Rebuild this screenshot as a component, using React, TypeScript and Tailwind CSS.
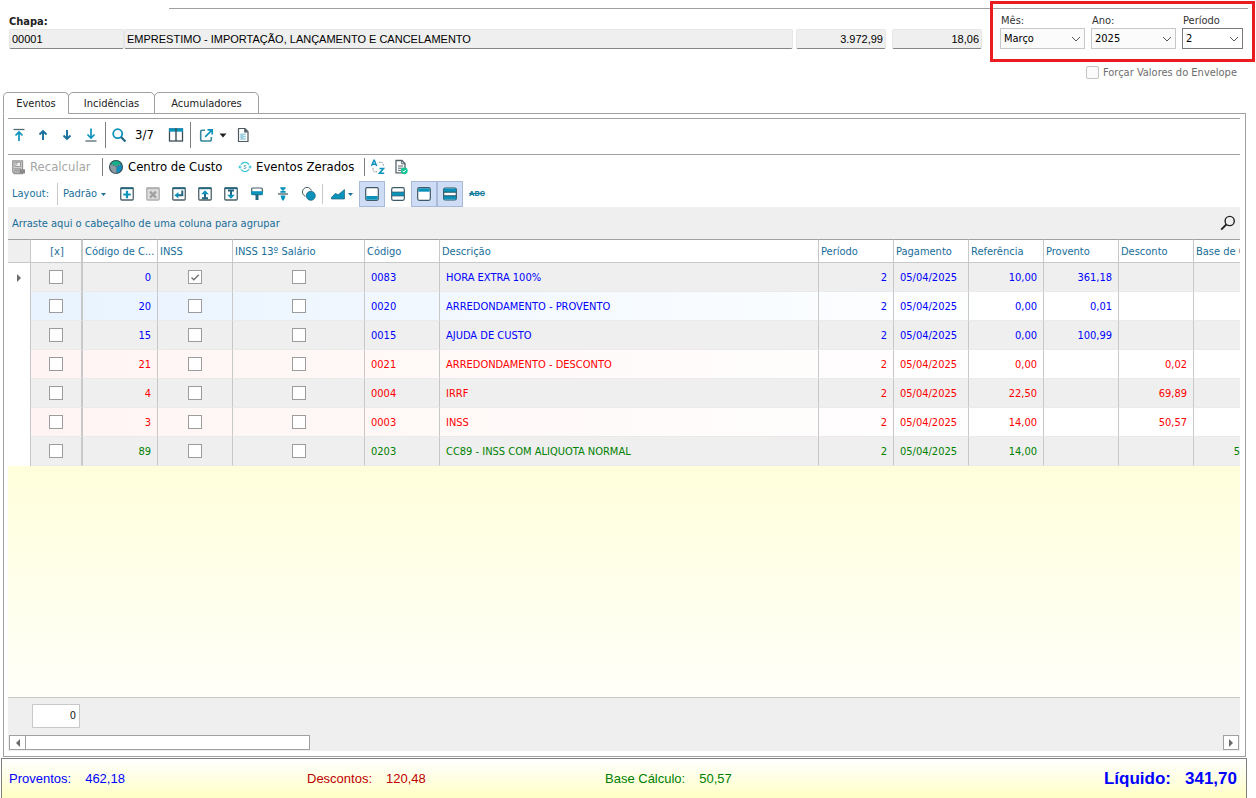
import { useState } from 'react';
import type { ReactNode } from 'react';
import clsx from 'clsx';

type Tone = 'blue' | 'red' | 'green';

interface Evento {
  centro: string;
  inss: boolean;
  codigo: string;
  descricao: string;
  referencia: string;
  provento?: string;
  desconto?: string;
  base?: string;
  tone: Tone;
}

const EVENTOS: Evento[] = [
  { centro: '0', inss: true, codigo: '0083', descricao: 'HORA EXTRA 100%', referencia: '10,00', provento: '361,18', tone: 'blue' },
  { centro: '20', inss: false, codigo: '0020', descricao: 'ARREDONDAMENTO - PROVENTO', referencia: '0,00', provento: '0,01', tone: 'blue' },
  { centro: '15', inss: false, codigo: '0015', descricao: 'AJUDA DE CUSTO', referencia: '0,00', provento: '100,99', tone: 'blue' },
  { centro: '21', inss: false, codigo: '0021', descricao: 'ARREDONDAMENTO - DESCONTO', referencia: '0,00', desconto: '0,02', tone: 'red' },
  { centro: '4', inss: false, codigo: '0004', descricao: 'IRRF', referencia: '22,50', desconto: '69,89', tone: 'red' },
  { centro: '3', inss: false, codigo: '0003', descricao: 'INSS', referencia: '14,00', desconto: '50,57', tone: 'red' },
  { centro: '89', inss: false, codigo: '0203', descricao: 'CC89 - INSS COM ALIQUOTA NORMAL', referencia: '14,00', base: '50,57', tone: 'green' },
];

const TONE_TEXT: Record<Tone, string> = {
  blue: 'text-[#0000ff]',
  red: 'text-[#ff0000]',
  green: 'text-[#008000]',
};

const TONE_ROW: Record<Tone, string> = {
  blue: 'bg-linear-to-r from-[#e8f3ff] to-white to-80%',
  red: 'bg-linear-to-r from-[#fff4f3] to-white to-80%',
  green: 'bg-[#efefef]',
};

const TEAL = '#0b92ba';
const NAVY = '#22667f';
const SLATE = '#4d6068';

function Icon({ children }: { children: ReactNode }) {
  return (
    <svg width="16" height="16" viewBox="0 0 16 16" fill="none" aria-hidden="true" className="shrink-0">
      {children}
    </svg>
  );
}

function SmallCaret() {
  return <svg width="5" height="3" viewBox="0 0 5 3" aria-hidden="true" className="shrink-0"><path d="M0 0h5L2.5 3z" fill="#1b6f9b" /></svg>;
}

function Sep({ className }: { className: string }) {
  return <span className={clsx('w-px shrink-0', className)} />;
}

/* Framed icon used by the layout toolbar */
function Frame({ children, off = false }: { children: ReactNode; off?: boolean }) {
  return (
    <Icon>
      <rect x="1.75" y="2" width="12.5" height="12" rx="1" fill={off ? '#dcdcdc' : '#fff'} stroke={off ? '#b0b0b0' : SLATE} strokeWidth="1.3" />
      <path d="M1.5 2.3h13" stroke={off ? '#b0b0b0' : NAVY} strokeWidth="1.8" />
      {children}
    </Icon>
  );
}

function ToolButton({ label, active = false, disabled = false, children }: { label: string; active?: boolean; disabled?: boolean; children: ReactNode }) {
  return (
    <button
      title={label}
      aria-label={label}
      disabled={disabled}
      className={clsx('flex h-[26px] w-[26px] shrink-0 items-center justify-center border', active ? 'border-[#a9b9d8] bg-[#cfdcf5]' : 'border-transparent')}
    >
      {children}
    </button>
  );
}

function IconButton({ label, className = '', children }: { label: string; className?: string; children: ReactNode }) {
  return (
    <button title={label} aria-label={label} className={clsx('flex h-6 w-4 shrink-0 items-center justify-center', className)}>
      {children}
    </button>
  );
}

function Field({ label, value, className }: { label: string; value: string; className: string }) {
  return (
    <input
      readOnly
      aria-label={label}
      defaultValue={value}
      className={clsx(
        "h-5 min-w-0 rounded-[2px] border border-[#e6e6e6] border-b-[#868686] bg-[#efefef] px-0.5 font-['Liberation_Sans',sans-serif] text-black outline-none",
        className,
      )}
    />
  );
}

function Combo({ id, label, value, className, dark = false }: { id: string; label: string; value: string; className: string; dark?: boolean }) {
  return (
    <div className={className}>
      <label htmlFor={id} className="block h-4 pl-px leading-[18px] text-[#333]">{label}</label>
      <div className="relative">
        <select
          id={id}
          defaultValue={value}
          className={clsx('block h-[21px] w-full appearance-none border pt-0.5 pl-[3px] text-black outline-none', dark ? 'border-[#7a7a7a] bg-white' : 'border-[#c8c8c8] bg-[#fbfbfb]')}
        >
          <option>{value}</option>
        </select>
        <svg width="10" height="6" viewBox="0 0 10 6" fill="none" aria-hidden="true" className="pointer-events-none absolute top-2 right-1">
          <path d="M1 1l4 4 4-4" stroke="#555" />
        </svg>
      </div>
    </div>
  );
}

function CellCheck({ label, checked = false }: { label: string; checked?: boolean }) {
  return (
    <span className="inline-grid h-3.5 w-3.5 align-middle">
      <input
        type="checkbox"
        aria-label={label}
        defaultChecked={checked}
        className="peer col-start-1 row-start-1 h-3.5 w-3.5 appearance-none border border-[#9c9c9c] bg-white"
      />
      <svg viewBox="0 0 14 14" fill="none" aria-hidden="true" className="pointer-events-none invisible col-start-1 row-start-1 h-3.5 w-3.5 peer-checked:visible">
        <path d="M3.5 7.5l2.3 2.3 5-5" stroke="#737373" strokeWidth="1.4" />
      </svg>
    </span>
  );
}

function HeaderCell({ children, className = '' }: { children?: ReactNode; className?: string }) {
  return (
    <th className={clsx('h-6 overflow-hidden border-t border-r border-b border-t-[#a0a0a0] border-r-[#c8c8c8] border-b-[#c8c8c8] pt-[3px] pb-0 pl-0.5 font-normal whitespace-nowrap', className)}>
      {children}
    </th>
  );
}

function Cell({ children, className = '' }: { children?: ReactNode; className?: string }) {
  return <td className={clsx('border-r border-b border-r-[#c8c8c8] border-b-[#eaeaea] px-1.5 pt-0.5 pb-0', className)}>{children}</td>;
}

function CheckCell({ label, checked, className = '' }: { label: string; checked?: boolean; className?: string }) {
  return (
    <td className={clsx('border-r border-b border-r-[#c8c8c8] border-b-[#eaeaea] p-0 text-center', className)}>
      <CellCheck label={label} checked={checked} />
    </td>
  );
}

function TopHeader() {
  return (
    <header className="h-[92px]">
      <div className="mt-2 mr-2 ml-[169px] h-px bg-[#a0a0a0]" />
      <div className="flex items-start">
        <div className="min-w-0 flex-1 pt-1 pl-[9px]">
          <div className="h-4 leading-[18px] font-bold text-[#222]">Chapa:</div>
          <div className="flex">
            <Field label="Chapa" value="00001" className="w-[115px]" />
            <Field label="Descrição" value="EMPRESTIMO - IMPORTAÇÃO, LANÇAMENTO E CANCELAMENTO" className="flex-1" />
            <Field label="Salário" value="3.972,99" className="ml-[3px] w-[90px] text-right" />
            <Field label="Valor hora" value="18,06" className="ml-1.5 w-[90px] text-right" />
          </div>
        </div>
        <div className="mr-px ml-2 w-[265px] shrink-0">
          <div className="-mt-2 flex h-[61px] gap-1.5 border-[3px] border-[#ea1c1f] pt-2 pl-[7px]">
            <Combo id="mes" label="Mês:" value="Março" className="w-[85px]" />
            <Combo id="ano" label="Ano:" value="2025" className="w-[85px]" />
            <Combo id="periodo" label="Período" value="2" className="w-[61px]" dark />
          </div>
          <label className="flex h-[21px] items-center justify-end gap-1 pr-[18px] text-[#6d6d6d]">
            <input type="checkbox" className="h-[13px] w-[13px] appearance-none rounded-[2px] border border-[#c4c4c4] bg-[#fbfbfb]" />
            <span className="pt-px">Forçar Valores do Envelope</span>
          </label>
        </div>
      </div>
    </header>
  );
}

function NavToolbar() {
  return (
    <div className="flex h-9 items-center border-t border-[#a0a0a0] pb-[3px] pl-[3px] text-[13px] text-black">
      <div className="flex gap-2">
        <IconButton label="Primeiro">
          <Icon><path d="M2.5 2.5h11" stroke="#506a75" strokeWidth="1.3" /><path d="M8 14V5.5M4.5 8.5L8 5l3.5 3.5" stroke={TEAL} strokeWidth="1.7" /></Icon>
        </IconButton>
        <IconButton label="Anterior">
          <Icon><path d="M8 13V4M4.5 7.5L8 4l3.5 3.5" stroke="#176f9c" strokeWidth="1.9" /></Icon>
        </IconButton>
        <IconButton label="Próximo">
          <Icon><path d="M8 3v9M4.5 8.5L8 12l3.5-3.5" stroke="#176f9c" strokeWidth="1.9" /></Icon>
        </IconButton>
        <IconButton label="Último">
          <Icon><path d="M2.5 14h11" stroke="#506a75" strokeWidth="1.3" /><path d="M8 1.5V10M4.5 7.5L8 11l3.5-3.5" stroke={TEAL} strokeWidth="1.7" /></Icon>
        </IconButton>
      </div>
      <Sep className="ml-1.5 h-[26px] bg-[#808080]" />
      <IconButton label="Localizar" className="ml-[5px]">
        <Icon><circle cx="6.7" cy="6.7" r="4.5" stroke={TEAL} strokeWidth="1.8" /><path d="M10 10l4.5 4.5" stroke={NAVY} strokeWidth="2.2" /></Icon>
      </IconButton>
      <span className="w-[41px] pl-2">3/7</span>
      <IconButton label="Colunas">
        <Icon>
          <rect x="1.5" y="2" width="13" height="12" stroke="#3c4c54" strokeWidth="1.3" />
          <path d="M1 1.3h14v3.4H1z" fill={TEAL} />
          <path d="M8 1.3V14" stroke="#3c4c54" strokeWidth="1.4" />
        </Icon>
      </IconButton>
      <Sep className="ml-1.5 h-[26px] bg-[#808080]" />
      <button title="Exportar" aria-label="Exportar" className="ml-2 flex h-6 items-center gap-1">
        <Icon>
          <path d="M6 3.2H3.2A1.5 1.5 0 0 0 1.7 4.7v7.8A1.5 1.5 0 0 0 3.2 14h7.6a1.5 1.5 0 0 0 1.5-1.5V10" stroke="#38879c" strokeWidth="1.6" />
          <path d="M8.5 2.8h4.7v4.7M13 3L6.2 9.8" stroke={TEAL} strokeWidth="1.7" />
        </Icon>
        <svg width="8" height="5" viewBox="0 0 8 5" aria-hidden="true" className="shrink-0"><path d="M0.5 0.5h7L4 4.5z" fill="#222" /></svg>
      </button>
      <IconButton label="Relatório" className="ml-2">
        <Icon>
          <path d="M3.5 1.5h6.3l3.2 3.2v9.8H3.5z" fill="#fff" stroke="#4c5960" strokeWidth="1.2" strokeLinejoin="round" />
          <path d="M9.2 1.5v4H13z" fill="#4c5960" />
          <path d="M5.3 6.5h5.5v6.3H5.3z" fill="#9ccfdf" />
          <path d="M8.5 8.3h2.3M8.5 10.8h2.3" stroke="#fff" />
        </Icon>
      </IconButton>
    </div>
  );
}

function ActionToolbar() {
  return (
    <div className="flex h-[27px] items-center border-t border-[#a0a0a0] pb-0.5 pl-[3px] text-[13px] text-black">
      <button disabled className="flex w-[91px] items-center gap-[3px] text-[#a6a6a6]">
        <Icon>
          <path d="M1.8 1.8h9.7v12.7H3.3L1.8 13z" fill="#d0d0d0" stroke="#959595" strokeWidth="1.3" />
          <path d="M4 3.2h5.5v4.3H4z" fill="#f4f4f4" stroke="#959595" />
          <path d="M5.8 3.5v2.7" stroke="#959595" />
          <path d="M3 9h7v4.5H3z" fill="#a8a8a8" />
          <path d="M8.8 10.3H14V14.5H8.8z" fill="#8a8a8a" />
        </Icon>
        Recalcular
      </button>
      <Sep className="h-[18px] bg-[#808080]" />
      <button className="ml-[5px] flex w-[129px] items-center gap-1">
        <Icon>
          <circle cx="8" cy="8" r="6.4" fill="#fff" />
          <path d="M8 7L2.2 4.8A6.6 6.6 0 0 1 13.8 4.8z" fill="#12b28d" />
          <path d="M8.3 7.8l5.6-2.6a6.3 6.3 0 0 1-5.6 9z" fill="#0f8ec0" />
          <path d="M7.4 7.8L2 5.4a6.3 6.3 0 0 0 5.4 8.8z" fill="#8d9ba1" />
          <circle cx="8" cy="8" r="6.5" stroke="#3d4f57" strokeWidth="1.1" />
          <path d="M8 7.5V14M2.5 5.2L8 7.5l5.5-2.3" stroke="#3d4f57" strokeWidth=".9" />
        </Icon>
        Centro de Custo
      </button>
      <button className="flex w-[127px] items-center gap-[3px]">
        <Icon>
          <path d="M4 5.6A4.8 4.8 0 0 1 12 5.6M12 10.4A4.8 4.8 0 0 1 4 10.4" stroke="#35c6d8" strokeWidth="1.2" />
          <path d="M2 8h2.4M11.6 8H14" stroke="#1bb5d0" strokeWidth="1.2" />
          <path d="M3.4 5.8L1.2 8l2.2 2.2zM12.6 5.8L14.8 8l-2.2 2.2z" fill="#3fcadb" />
          <path d="M9.3 6.5H7.5L6.8 7.3l2.4 1.3-.8 1H6.6" stroke="#5fa9b8" strokeWidth=".9" />
        </Icon>
        Eventos Zerados
      </button>
      <Sep className="h-[18px] bg-[#808080]" />
      <IconButton label="Ordenar" className="ml-[5px]">
        <Icon>
          <path d="M1.5 7L3.9 1.3h.4L6.7 7M2.5 5.3h3.2" stroke={TEAL} strokeWidth="1.4" />
          <path d="M9.5 9.5h4l-4 4.8h4.7" stroke={TEAL} strokeWidth="1.6" />
          <path d="M9 3.3h2.3a2 2 0 0 1 2 2V7M7 12.8H5a2 2 0 0 1-2-2V9" stroke="#7d8a90" strokeDasharray="1.5 1" />
        </Icon>
      </IconButton>
      <IconButton label="Validar" className="ml-[7px]">
        <Icon>
          <path d="M3 1.5h6l3 3v9.3H3z" fill="#fff" stroke="#56646b" strokeWidth="1.3" />
          <path d="M8.7 1.5v3.3H12M5 7h5M5 9.2h5M5 11.4h3" stroke="#56646b" />
          <circle cx="11.3" cy="11.8" r="3.4" fill="#14c595" />
          <path d="M9.7 11.9l1.2 1.2 2-2.2" stroke="#fff" />
        </Icon>
      </IconButton>
    </div>
  );
}

function LayoutToolbar() {
  return (
    <div className="flex h-[26px] items-center pl-1 text-[#1b6f9b]">
      <span className="w-[45px]">Layout:</span>
      <Sep className="h-[22px] bg-[#c8c8c8]" />
      <button className="ml-[5px] flex w-[51px] items-center gap-1">
        Padrão
        <SmallCaret />
      </button>
      <ToolButton label="Novo"><Frame><path d="M8 4.8v7.4M4.3 8.5h7.4" stroke={TEAL} strokeWidth="2.2" /></Frame></ToolButton>
      <ToolButton label="Excluir" disabled><Frame off><path d="M5 5.6l6 6M11 5.6l-6 6" stroke="#a0a0a0" strokeWidth="2.2" /></Frame></ToolButton>
      <ToolButton label="Aplicar"><Frame><path d="M11.3 4.5v4.7H6" stroke={NAVY} strokeWidth="2" /><path d="M3.4 9.2l4-3.3v6.6z" fill={TEAL} /></Frame></ToolButton>
      <ToolButton label="Importar"><Frame><path d="M8 12.8V7M5 12.3h6" stroke={NAVY} strokeWidth="2" /><path d="M4.2 8.2L8 4.2l3.8 4z" fill={TEAL} /></Frame></ToolButton>
      <ToolButton label="Exportar layout"><Frame><path d="M8 4V9M5 4.5h6" stroke={NAVY} strokeWidth="2" /><path d="M4.2 8.8L8 12.8l3.8-4z" fill={TEAL} /></Frame></ToolButton>
      <ToolButton label="Formatação">
        <Icon>
          <rect x="2.7" y="2" width="10.6" height="6.6" rx="1" fill="#fff" stroke={SLATE} strokeWidth="1.2" />
          <path d="M2 5.2h12v3.5H2z" fill={TEAL} />
          <path d="M6.5 8.5h3V14h-3z" fill={NAVY} />
        </Icon>
      </ToolButton>
      <ToolButton label="Ajustar">
        <Icon>
          <path d="M5.5 1.5l5 5M10.5 1.5l-5 5M5.5 2h5M5.5 6h5" stroke={TEAL} strokeWidth="1.5" />
          <path d="M3 8h10" stroke={SLATE} strokeWidth="1.3" />
          <path d="M5.5 9.5h5L9.5 13 8 15l-1.5-2z" fill={TEAL} />
        </Icon>
      </ToolButton>
      <ToolButton label="Filtro">
        <Icon>
          <circle cx="6" cy="6" r="4.6" stroke={SLATE} fill="#fff" />
          <circle cx="9.8" cy="9.8" r="5.4" fill="#fff" />
          <circle cx="9.8" cy="9.8" r="4.5" fill={TEAL} stroke={NAVY} strokeWidth=".8" />
        </Icon>
      </ToolButton>
      <Sep className="h-5 bg-[#c8c8c8]" />
      <button title="Gráfico" aria-label="Gráfico" className="flex h-[26px] w-9 shrink-0 items-center justify-center gap-0.5">
        <Icon>
          <path d="M1.5 13V11.3L5.5 7.3l2.6 1.5L14.5 3.5V13z" fill={TEAL} stroke={NAVY} strokeWidth=".7" />
        </Icon>
        <SmallCaret />
      </button>
      <ToolButton label="Rodapé" active>
        <Icon><rect x="1.7" y="1.7" width="12.6" height="12.6" rx="1.5" fill="#fff" stroke="#3f5a66" strokeWidth="1.2" /><path d="M2.3 10h11.4v3.7H2.3z" fill={TEAL} /></Icon>
      </ToolButton>
      <ToolButton label="Rodapé de grupo">
        <Icon><rect x="1.7" y="1.7" width="12.6" height="12.6" rx="1.5" fill="#fff" stroke="#3f5a66" strokeWidth="1.2" /><path d="M2 6h12v4H2z" fill={TEAL} /><path d="M1.5 6h13M1.5 10h13" stroke="#3f5a66" strokeWidth=".7" /></Icon>
      </ToolButton>
      <ToolButton label="Cabeçalho" active>
        <Icon><rect x="1.7" y="1.7" width="12.6" height="12.6" rx="1.5" fill="#fff" stroke="#3f5a66" strokeWidth="1.2" /><path d="M2.3 2.3h11.4v3.4H2.3z" fill={TEAL} /></Icon>
      </ToolButton>
      <ToolButton label="Linhas alternadas" active>
        <Icon><rect x="1.7" y="2" width="12.6" height="12" rx="1.5" fill="#fff" stroke="#2d5565" strokeWidth="1.2" /><path d="M2 2.6h12v3.6H2zM2 9.8h12v3.6H2z" fill={TEAL} /><path d="M1.5 6.2h13M1.5 9.8h13" stroke="#2d5565" /></Icon>
      </ToolButton>
      <button className="w-7 text-center font-['Roboto',sans-serif] text-[8px] font-black text-[#17809f] line-through">ABC</button>
    </div>
  );
}

function EventosTable() {
  return (
    <div className="overflow-hidden">
      <table className="w-[calc(100%+29px)] table-fixed border-separate border-spacing-0 bg-white text-left">
        <colgroup>
          <col className="w-[23px]" />
          <col className="w-[52px]" />
          <col className="w-[75px]" />
          <col className="w-[75px]" />
          <col className="w-[132px]" />
          <col className="w-[75px]" />
          <col />
          <col className="w-[75px]" />
          <col className="w-[75px]" />
          <col className="w-[75px]" />
          <col className="w-[75px]" />
          <col className="w-[75px]" />
          <col className="w-[75px]" />
        </colgroup>
        <thead className="text-[#176d99]">
          <tr>
            <HeaderCell className="bg-[#efefef]" />
            <HeaderCell className="border-r-2 border-r-[#a0a0a0] text-center">[x]</HeaderCell>
            <HeaderCell>Código de C...</HeaderCell>
            <HeaderCell>INSS</HeaderCell>
            <HeaderCell>INSS 13º Salário</HeaderCell>
            <HeaderCell>Código</HeaderCell>
            <HeaderCell>Descrição</HeaderCell>
            <HeaderCell>Período</HeaderCell>
            <HeaderCell>Pagamento</HeaderCell>
            <HeaderCell>Referência</HeaderCell>
            <HeaderCell>Provento</HeaderCell>
            <HeaderCell>Desconto</HeaderCell>
            <HeaderCell>Base de C...</HeaderCell>
          </tr>
        </thead>
        <tbody>
          {EVENTOS.map((ev, i) => (
            <tr key={ev.codigo} className={clsx('h-[29px]', TONE_TEXT[ev.tone], i % 2 === 0 ? 'bg-[#efefef]' : TONE_ROW[ev.tone])}>
              <td className="border-r border-[#c8c8c8] bg-white py-0 pr-0 pl-2">
                {i === 0 && (
                  <svg width="6" height="8" viewBox="0 0 6 8" aria-label="Linha atual"><path d="M1 0l4 4-4 4z" fill="#6b6b6b" /></svg>
                )}
              </td>
              <CheckCell label={`Selecionar ${ev.descricao}`} className="border-r-2 border-r-[#a0a0a0]" />
              <Cell className="text-right">{ev.centro}</Cell>
              <CheckCell label="INSS" checked={ev.inss} />
              <CheckCell label="INSS 13º Salário" />
              <Cell>{ev.codigo}</Cell>
              <Cell className="truncate">{ev.descricao}</Cell>
              <Cell className="text-right">2</Cell>
              <Cell>05/04/2025</Cell>
              <Cell className="text-right">{ev.referencia}</Cell>
              <Cell className="text-right">{ev.provento}</Cell>
              <Cell className="text-right">{ev.desconto}</Cell>
              <Cell className="text-right">{ev.base}</Cell>
            </tr>
          ))}
        </tbody>
      </table>
    </div>
  );
}

function GridFooter() {
  return (
    <div className="border-t border-[#c8c8c8] bg-[#efefef]">
      <div className="flex h-[37px] items-center pb-px pl-6">
        <output className="h-6 w-12 border border-[#c8c8c8] bg-white pr-[3px] text-right leading-[22px] text-[#222]">0</output>
      </div>
      <div className="flex h-4 pr-px pl-px">
        <button aria-label="Rolar para a esquerda" className="flex h-[15px] w-[17px] items-center justify-center border border-[#a0a0a0] bg-white">
          <svg width="4" height="8" viewBox="0 0 4 8" aria-hidden="true"><path d="M4 0v8L0 4z" fill="#6b6b6b" /></svg>
        </button>
        <div className="-ml-px flex-1">
          <div className="h-[15px] w-[285px] border border-[#a0a0a0] bg-white" />
        </div>
        <button aria-label="Rolar para a direita" className="flex h-[15px] w-4 items-center justify-center border border-[#a0a0a0] bg-white">
          <svg width="4" height="8" viewBox="0 0 4 8" aria-hidden="true"><path d="M0 0v8l4-4z" fill="#6b6b6b" /></svg>
        </button>
      </div>
    </div>
  );
}

function Totals() {
  return (
    <footer className="mt-px mr-[9px] ml-px flex h-10 items-center border border-b-0 border-[#808080] bg-linear-to-b from-white to-[#ffffc4] pr-[9px] pl-[7px] font-['Liberation_Sans',sans-serif] text-[13px]">
      <div className="flex w-[298px] gap-3.5 text-[#0000ff]"><span>Proventos:</span><span>462,18</span></div>
      <div className="flex w-[298px] gap-3.5 text-[#c00000]"><span>Descontos:</span><span>120,48</span></div>
      <div className="flex flex-1 gap-3.5 text-[#008000]"><span>Base Cálculo:</span><span>50,57</span></div>
      <div className="flex gap-3.5 text-[17px] font-bold text-[#0000ff]"><span>Líquido:</span><span>341,70</span></div>
    </footer>
  );
}

const TABS = [
  { name: 'Eventos', className: 'w-[66px]' },
  { name: 'Incidências', className: 'w-[87px]' },
  { name: 'Acumuladores', className: 'w-[105px]' },
];

export default function App() {
  const [tab, setTab] = useState('Eventos');

  return (
    <div className="flex min-h-screen flex-col bg-white font-['DejaVu_Sans_Condensed','DejaVu_Sans',sans-serif] text-[11px]">
      <TopHeader />
      <div role="tablist" className="relative ml-[3px] flex">
        {TABS.map((t) => (
          <button
            key={t.name}
            role="tab"
            aria-selected={tab === t.name}
            onClick={() => setTab(t.name)}
            className={clsx(
              '-mr-px h-[22px] rounded-t-[5px] border border-[#a0a0a0] bg-white pt-0.5 text-[#222]',
              tab === t.name && 'border-b-white',
              t.className,
            )}
          >
            {t.name}
          </button>
        ))}
      </div>
      <main className="-mt-px mr-2.5 ml-[3px] flex flex-1 flex-col border border-[#a0a0a0] pt-1 pr-[5px] pb-[5px] pl-1">
        <NavToolbar />
        <ActionToolbar />
        <LayoutToolbar />
        <div className="flex h-8 items-center justify-between bg-[#efefef] pr-1 pl-1 text-[#176d99]">
          <span className="pt-[3px]">Arraste aqui o cabeçalho de uma coluna para agrupar</span>
          <button aria-label="Pesquisar">
            <Icon><circle cx="9.7" cy="6" r="4.6" stroke="#222" strokeWidth="1.4" /><path d="M6.4 9.4L1.2 14.6" stroke="#222" strokeWidth="2" /></Icon>
          </button>
        </div>
        <EventosTable />
        <div className="flex-1 bg-linear-to-b from-[#ffffdc] to-[#fffff8]" />
        <GridFooter />
      </main>
      <Totals />
    </div>
  );
}
